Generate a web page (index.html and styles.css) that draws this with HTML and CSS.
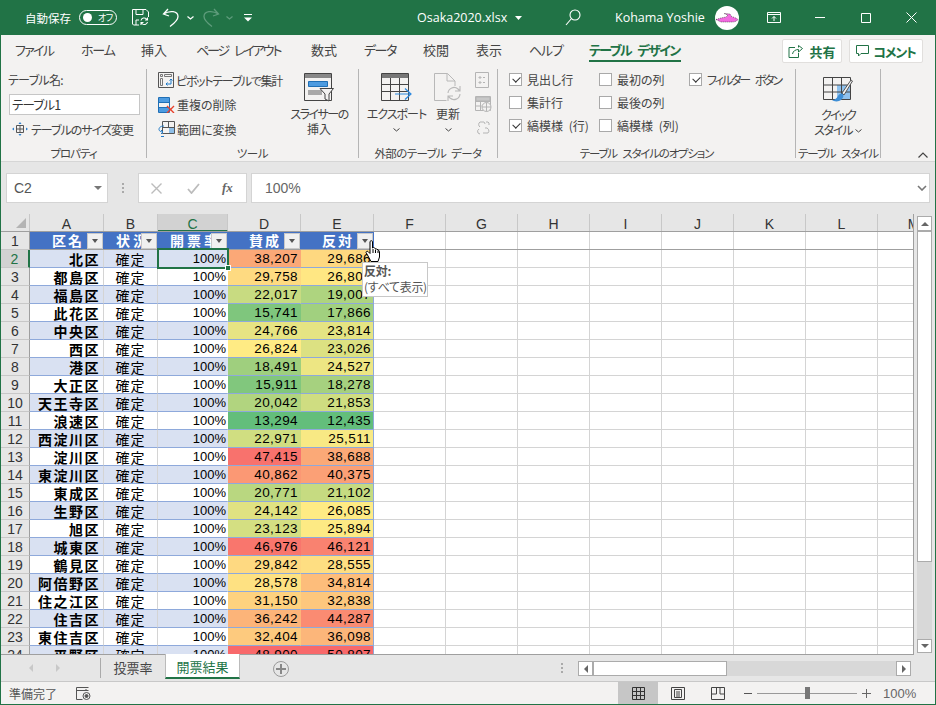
FILE: index.html
```html
<!DOCTYPE html>
<html lang="ja">
<head>
<meta charset="utf-8">
<title>Osaka2020.xlsx</title>
<link rel="stylesheet" href="styles.css">
</head>
<body>
<div class="window">
  <header class="titlebar">
    <span class="autosave">自動保存</span>
    <span class="toggle"><i class="knob"></i><span class="toggle-text">オフ</span></span>
    <svg class="qa save" width="17" height="17" viewBox="0 0 17 17" fill="none" stroke="#fff"><path d="M.5.500h13.500l2.500 2.500v5M.5.500v14.500l1 1h5.500M4 .5v5h7V.5M4 16v-5h3"/><path d="M9 11.500a3.200 3.200 0 0 1 5.500-1.500l1 1M15.500 13a3.200 3.200 0 0 1-5.500 1.500l-1-1M15.500 8.500V11h-2.500M9 16v-2.500h2.500" stroke-width="1.100"/></svg>
    <svg class="qa undo" width="18" height="19" viewBox="0 0 18 19" fill="none" stroke="#fff" stroke-width="1.300"><path d="M6 1 1.500 6 7 8M1.500 6C8 2 16 3 16 8.500c0 4-4 7-8 10"/></svg>
    <svg class="qa chev1" width="7" height="4" viewBox="0 0 7 4" fill="none" stroke="#fff" stroke-width="1.200"><path d="m.5.500 3 2.500 3-2.500"/></svg>
    <svg class="qa redo" width="18" height="19" viewBox="0 0 18 19" fill="none" stroke="#5f9c7c" stroke-width="1.300"><path d="M12 1l4.500 5L11 8M16.500 6C10 2 2 3 2 8.500c0 4 4 7 8 10"/></svg>
    <svg class="qa chev2" width="7" height="4" viewBox="0 0 7 4" fill="none" stroke="#5f9c7c" stroke-width="1.200"><path d="m.5.500 3 2.500 3-2.500"/></svg>
    <svg class="qa more" width="8" height="8" viewBox="0 0 8 8" fill="#fff"><path d="M0 0h8v1H0zM0 3.500h8L4 7.500z"/></svg>
    <span class="doc">Osaka2020.xlsx</span>
    <svg class="qa caret" width="7" height="4" viewBox="0 0 7 4" fill="#fff"><path d="M0 0h7L3.500 4z"/></svg>
    <svg class="qa search" width="16" height="17" viewBox="0 0 16 17" fill="none" stroke="#fff" stroke-width="1.100"><circle cx="10" cy="6" r="5"/><path d="M6.500 9.500 1 16"/></svg>
    <span class="user">Kohama Yoshie</span>
    <span class="avatar"><svg width="24" height="24" viewBox="0 0 24 24"><path d="M1 13.500 6 12l5-1 2-2-4-1.500 6 .5 2 3c2 0 4 1 6 2.500-1 1.500-3 2.500-6 2.500H6z" fill="#f26ae0" stroke="#222" stroke-width=".6" stroke-dasharray="1 1"/></svg></span>
    <svg class="qa display" width="14" height="11" viewBox="0 0 14 11" fill="none" stroke="#fff"><path d="M.5.500h13v10H.5zM.5 2.500h13M7 9V4.500M5 6.500l2-2 2 2"/></svg>
    <svg class="qa min" width="10" height="1" viewBox="0 0 10 1" fill="#fff"><path d="M0 0h10v1H0z"/></svg>
    <svg class="qa max" width="10" height="10" viewBox="0 0 10 10" fill="none" stroke="#fff"><path d="M.5.500h9v9h-9z"/></svg>
    <svg class="qa close" width="11" height="11" viewBox="0 0 11 11" fill="none" stroke="#fff"><path d="m.5.500 10 10M10.500.500l-10 10"/></svg>
  </header>

  <nav class="tabs">
    <span class="tab w-file">ファイル</span>
    <span class="tab w-home">ホーム</span>
    <span class="tab w-ins">挿入</span>
    <span class="tab w-page">ページ レイアウト</span>
    <span class="tab w-form">数式</span>
    <span class="tab w-data">データ</span>
    <span class="tab w-rev">校閲</span>
    <span class="tab w-view">表示</span>
    <span class="tab w-help">ヘルプ</span>
    <span class="tab tab-active">テーブル デザイン</span>
    <span class="tab-btn share"><svg width="15" height="13" viewBox="0 0 15 13" fill="none" stroke="#217346"><path d="M7 2.500H1v10h9.500V8"/><path d="M4.500 9c.5-3 3-4.500 6-4.500V7L14.500 3.500 10.500.5v2" /></svg>共有</span>
    <span class="tab-btn comment"><svg width="13" height="12" viewBox="0 0 13 12" fill="none" stroke="#217346"><path d="M.5.500h12v8H5L2.500 11V8.500h-2z" /></svg><span class="k12">コメント</span></span>
  </nav>

  <section class="ribbon">
    <div class="group g-prop">
      <div class="group-body prop-body">
        <div class="small-text k07">テーブル名:</div>
        <div class="name-input">テーブル1</div>
        <div class="cmd resize"><svg width="16" height="14" viewBox="0 0 16 14" fill="none"><path d="M4.500 3.500h7v7h-7zM8 3.500v7M4.500 7h7" stroke="#555"/><path d="M8 0 6.500 2h3zM8 14l-1.500-2h3zM0 7l2-1.500v3zM16 7l-2-1.500v3z" fill="#2a7fd0"/></svg><span class="k10">テーブルのサイズ変更</span></div>
      </div>
      <div class="group-label k10">プロパティ</div>
    </div>
    <div class="group g-tools">
      <div class="group-body tools-body">
        <div class="cmd-col tool-cmds">
          <div class="cmd"><svg width="16" height="16" viewBox="0 0 16 16" fill="none"><path d="M.5.500h15v15H.5z" stroke="#555"/><path d="M2.500 2.500h2v2h-2zM6.500 2.500h7v2h-7zM2.500 6.500h2v7h-2z" stroke="#777"/><path d="M13 7v5H8M11.500 8.500 13 7l1.500 1.500M9.500 10.500 8 12l1.500 1.500" stroke="#1f7ac8"/></svg><span class="k13">ピボットテーブルで集計</span></div>
          <div class="cmd"><svg width="17" height="16" viewBox="0 0 17 16" fill="none"><path d="M.5.500h11v15H.5zM.5 5.500h11M.5 10.500h11" stroke="#1f6fb5"/><path d="M1 1h10v4H1z" fill="#4d9be0"/><path d="M1 11h10v4H1z" fill="#4d9be0"/><path d="m9 9 7 7M16 9l-7 7" stroke="#e8402a" stroke-width="1.400"/></svg>重複の削除</div>
          <div class="cmd"><svg width="17" height="16" viewBox="0 0 17 16" fill="none"><path d="M4.500.500h12v12h-12zM4.500 6.500h12M10.500.500v6" stroke="#555"/><path d="M11 7h5v5h-5z" fill="#8fbfe8"/><path d="M6 5C2 5 1 7 1 8.500S3 11 5 11M3 9l2 2-2 2M6 15.500H3" stroke="#1f7ac8"/></svg>範囲に変換</div>
        </div>
        <div class="big slicer">
          <svg width="30" height="29" viewBox="0 0 30 29" fill="none"><path d="M.5.500h27v27H.5z" stroke="#444"/><path d="M1 1h26v4H1z" fill="#888"/><path d="M4.500 8.500h19v5h-19z" fill="#4d9be0" stroke="#1f6fb5"/><path d="M4 17h14v5H4z" fill="#a8a8a8"/><path d="M16 15.500h13.500L25 21v7l-4-2v-5z" fill="#f3f2f1" stroke="#444"/></svg>
          <span class="big-text"><span class="k15">スライサーの</span><br>挿入</span>
        </div>
      </div>
      <div class="group-label k05">ツール</div>
    </div>
    <div class="group g-ext">
      <div class="group-body ext-body">
        <div class="big export">
          <svg width="31" height="29" viewBox="0 0 31 29" fill="none"><path d="M.5.500h27v27H.5zM.5 11.500h27M.5 18.500h27M9.500 4.500v23M18.500 4.500v23" stroke="#444"/><path d="M1 1h26v4H1z" fill="#777"/><path d="M14 21h15.500M24 15.500l6 5.500-6 5.500" stroke="#2d8ae0" stroke-width="1.200"/></svg>
          <span class="big-text k10">エクスポート</span>
          <svg class="chev" width="7" height="4" viewBox="0 0 7 4" fill="none" stroke="#444"><path d="m.5.500 3 2.500 3-2.500"/></svg>
        </div>
        <div class="big refresh">
          <svg width="28" height="29" viewBox="0 0 28 29" fill="none" stroke="#b8b8b8"><path d="M.5.500h13L21 8v5M.5.500v27h12M13 .5V8h8"/><path d="M14 20a6 6 0 0 1 10-4l2 2M26 21a6 6 0 0 1-10 4l-2-2M26 13v5h-5M14 28v-5h5" stroke-width="1.100"/></svg>
          <span class="big-text">更新</span>
          <svg class="chev" width="7" height="4" viewBox="0 0 7 4" fill="none" stroke="#444"><path d="m.5.500 3 2.500 3-2.500"/></svg>
        </div>
        <div class="cmd-col ext-icons">
          <svg width="15" height="16" viewBox="0 0 15 16" fill="none" stroke="#b4b4b4"><path d="M.5.500h13v15H.5zM4 5h2v1H4zM4 10h2v1H4zM8 5.500h2M8 10.500h2"/></svg>
          <svg width="17" height="16" viewBox="0 0 17 16" fill="none" stroke="#b4b4b4"><path d="M.5.500h15v14H.5zM.5 5.500h15M.5 10h6M5.500 5.500v9"/><path d="M1 1h14v4H1z" fill="#c8c8c8"/><circle cx="11.500" cy="11" r="4.500" fill="#f3f2f1"/><path d="M7 11h9M11.500 6.500v9"/></svg>
          <svg width="16" height="15" viewBox="0 0 16 15" fill="none" stroke="#b4b4b4"><path d="M5 7a3 3 0 0 1 0-5h4a3 3 0 0 1 1 2M10 8a3 3 0 0 1 3 5H8M5 14l-2-1a3 3 0 0 1 1-4M12 1v2M15 4h-2M14 2l-1 1"/></svg>
        </div>
      </div>
      <div class="group-label lab-ext">外部のテーブル データ</div>
    </div>
    <div class="group g-opt">
      <div class="group-body opt-body">
        <label class="opt"><i class="box on"></i>見出し行</label>
        <label class="opt"><i class="box"></i>最初の列</label>
        <label class="opt"><i class="box on"></i><span class="filter">フィルター ボタン</span></label>
        <label class="opt"><i class="box"></i>集計行</label>
        <label class="opt"><i class="box"></i>最後の列</label>
        <span></span>
        <label class="opt sp"><i class="box on"></i>縞模様 (行)</label>
        <label class="opt sp"><i class="box"></i>縞模様 (列)</label>
      </div>
      <div class="group-label lab-opt">テーブル スタイルのオプション</div>
    </div>
    <div class="group g-style">
      <div class="group-body style-body">
        <svg width="30" height="28" viewBox="0 0 30 28" fill="none"><path d="M14 9h14v14H14z" fill="#8fc2ee"/><path d="M.5 1.500h27v22H.5zM.5 9h27M.5 16h27M9.500 1.500v22M18.500 1.500v22" stroke="#444"/><path d="M19 17 28 4l1.500 1L21 19z" fill="#f3f2f1" stroke="#555"/><path d="M20 18c-2-1-4 0-5 2s-3 4-6 4c2 2 8 2 10-1 1-1 2-3 1-5z" fill="#3f8fd6"/></svg>
        <span class="big-text"><span class="k20">クイック</span><br><span class="k12">スタイル</span> <svg class="chev-in" width="7" height="4" viewBox="0 0 7 4" fill="none" stroke="#444"><path d="m.5.500 3 2.500 3-2.500"/></svg></span>
      </div>
      <div class="group-label lab-style">テーブル スタイル</div>
    </div>
    <div class="collapse"><svg width="10" height="6" viewBox="0 0 10 6" fill="none" stroke="#444" stroke-width="1.200"><path d="m.5 5.500 4.500-4.500 4.500 4.500"/></svg></div>
  </section>

  <section class="fbar">
    <div class="namebox"><span>C2</span><svg width="8" height="4" viewBox="0 0 8 4" fill="#777"><path d="M0 0h8L4 4z"/></svg></div>
    <div class="fdots"><i></i><i></i><i></i></div>
    <div class="fbtns">
      <svg width="11" height="11" viewBox="0 0 11 11" fill="none" stroke="#bcbcbc" stroke-width="1.400"><path d="m.5.500 10 10M10.500.500l-10 10"/></svg>
      <svg width="13" height="11" viewBox="0 0 13 11" fill="none" stroke="#bcbcbc" stroke-width="1.800"><path d="m1 6 3.500 4L12 1"/></svg>
      <span class="fx">fx</span>
    </div>
    <div class="finput"><span>100%</span><svg width="10" height="6" viewBox="0 0 10 6" fill="none" stroke="#777" stroke-width="1.600"><path d="m1 1 4 4 4-4"/></svg></div>
  </section>

  <section class="main">
    <div class="sheet">
      <div class="head">
        <div class="corner"><i></i></div>
        <div class="ch a">A</div><div class="ch b">B</div><div class="ch c cur">C</div><div class="ch d">D</div><div class="ch e">E</div>
        <div class="ch f">F</div><div class="ch f">G</div><div class="ch f">H</div><div class="ch f">I</div><div class="ch f">J</div><div class="ch f">K</div><div class="ch f">L</div><div class="ch f">M</div>
      </div>
      <div class="row first"><div class="rh">1</div>
        <div class="th a"><b>区名</b><i class="fb"></i></div><div class="th b"><b class="clip">状況</b><i class="fb"></i></div><div class="th c"><b class="clip">開票率</b><i class="fb"></i></div><div class="th d"><b>賛成</b><i class="fb"></i></div><div class="th e"><b>反対</b><i class="fb"></i></div><div class="blank"></div></div>
      <div class="row band"><div class="rh cur">2</div><div class="td a nm">北区</div><div class="td b">確定</div><div class="td c">100%</div><div class="td d" style="background:#fba877">38,207</div><div class="td e" style="background:#fed880">29,686</div><div class="blank"></div></div>
      <div class="row"><div class="rh">3</div><div class="td a nm">都島区</div><div class="td b">確定</div><div class="td c">100%</div><div class="td d" style="background:#feda81">29,758</div><div class="td e" style="background:#ffe783">26,807</div><div class="blank"></div></div>
      <div class="row band"><div class="rh">4</div><div class="td a nm">福島区</div><div class="td b">確定</div><div class="td c">100%</div><div class="td d" style="background:#c8db81">22,017</div><div class="td e" style="background:#aed47f">19,007</div><div class="blank"></div></div>
      <div class="row"><div class="rh">5</div><div class="td a nm">此花区</div><div class="td b">確定</div><div class="td c">100%</div><div class="td d" style="background:#7fc67d">15,741</div><div class="td e" style="background:#a1d07f">17,866</div><div class="blank"></div></div>
      <div class="row band"><div class="rh">6</div><div class="td a nm">中央区</div><div class="td b">確定</div><div class="td c">100%</div><div class="td d" style="background:#e7e483">24,766</div><div class="td e" style="background:#e5e483">23,814</div><div class="blank"></div></div>
      <div class="row"><div class="rh">7</div><div class="td a nm">西区</div><div class="td b">確定</div><div class="td c">100%</div><div class="td d" style="background:#ffeb84">26,824</div><div class="td e" style="background:#dce182">23,026</div><div class="blank"></div></div>
      <div class="row band"><div class="rh">8</div><div class="td a nm">港区</div><div class="td b">確定</div><div class="td c">100%</div><div class="td d" style="background:#9fcf7e">18,491</div><div class="td e" style="background:#ede683">24,527</div><div class="blank"></div></div>
      <div class="row"><div class="rh">9</div><div class="td a nm">大正区</div><div class="td b">確定</div><div class="td c">100%</div><div class="td d" style="background:#81c77d">15,911</div><div class="td e" style="background:#a6d17f">18,278</div><div class="blank"></div></div>
      <div class="row band"><div class="rh">10</div><div class="td a nm">天王寺区</div><div class="td b">確定</div><div class="td c">100%</div><div class="td d" style="background:#b1d47f">20,042</div><div class="td e" style="background:#cfdd81">21,853</div><div class="blank"></div></div>
      <div class="row"><div class="rh">11</div><div class="td a nm">浪速区</div><div class="td b">確定</div><div class="td c">100%</div><div class="td d" style="background:#63be7b">13,294</div><div class="td e" style="background:#63be7b">12,435</div><div class="blank"></div></div>
      <div class="row band"><div class="rh">12</div><div class="td a nm">西淀川区</div><div class="td b">確定</div><div class="td c">100%</div><div class="td d" style="background:#d0de81">22,971</div><div class="td e" style="background:#f8e984">25,511</div><div class="blank"></div></div>
      <div class="row"><div class="rh">13</div><div class="td a nm">淀川区</div><div class="td b">確定</div><div class="td c">100%</div><div class="td d" style="background:#f8726d">47,415</div><div class="td e" style="background:#fba977">38,688</div><div class="blank"></div></div>
      <div class="row band"><div class="rh">14</div><div class="td a nm">東淀川区</div><div class="td b">確定</div><div class="td c">100%</div><div class="td d" style="background:#fb9874">40,862</div><div class="td e" style="background:#fba076">40,375</div><div class="blank"></div></div>
      <div class="row"><div class="rh">15</div><div class="td a nm">東成区</div><div class="td b">確定</div><div class="td c">100%</div><div class="td d" style="background:#b9d780">20,771</div><div class="td e" style="background:#c6db81">21,102</div><div class="blank"></div></div>
      <div class="row band"><div class="rh">16</div><div class="td a nm">生野区</div><div class="td b">確定</div><div class="td c">100%</div><div class="td d" style="background:#e0e282">24,142</div><div class="td e" style="background:#ffeb84">26,085</div><div class="blank"></div></div>
      <div class="row"><div class="rh">17</div><div class="td a nm">旭区</div><div class="td b">確定</div><div class="td c">100%</div><div class="td d" style="background:#d4df82">23,123</div><div class="td e" style="background:#fdea84">25,894</div><div class="blank"></div></div>
      <div class="row band"><div class="rh">18</div><div class="td a nm">城東区</div><div class="td b">確定</div><div class="td c">100%</div><div class="td d" style="background:#f9766d">46,976</div><div class="td e" style="background:#f98270">46,121</div><div class="blank"></div></div>
      <div class="row"><div class="rh">19</div><div class="td a nm">鶴見区</div><div class="td b">確定</div><div class="td c">100%</div><div class="td d" style="background:#fed981">29,842</div><div class="td e" style="background:#fede82">28,555</div><div class="blank"></div></div>
      <div class="row band"><div class="rh">20</div><div class="td a nm">阿倍野区</div><div class="td b">確定</div><div class="td c">100%</div><div class="td d" style="background:#fee182">28,578</div><div class="td e" style="background:#fdbd7b">34,814</div><div class="blank"></div></div>
      <div class="row"><div class="rh">21</div><div class="td a nm">住之江区</div><div class="td b">確定</div><div class="td c">100%</div><div class="td d" style="background:#fed27f">31,150</div><div class="td e" style="background:#fdc77d">32,838</div><div class="blank"></div></div>
      <div class="row band"><div class="rh">22</div><div class="td a nm">住吉区</div><div class="td b">確定</div><div class="td c">100%</div><div class="td d" style="background:#fcb479">36,242</div><div class="td e" style="background:#fa8b72">44,287</div><div class="blank"></div></div>
      <div class="row"><div class="rh">23</div><div class="td a nm">東住吉区</div><div class="td b">確定</div><div class="td c">100%</div><div class="td d" style="background:#fdca7e">32,404</div><div class="td e" style="background:#fcb67a">36,098</div><div class="blank"></div></div>
      <div class="row band"><div class="rh">24</div><div class="td a nm">平野区</div><div class="td b">確定</div><div class="td c">100%</div><div class="td d" style="background:#f8696b">48,900</div><div class="td e" style="background:#f8696b">50,807</div><div class="blank"></div></div>
      <div class="selection"><i class="handle"></i></div>
      <div class="tip"><b>反対:</b><span>(すべて表示)</span></div>
      <svg class="hand" width="17" height="23" viewBox="0 0 17 23"><path d="M5 1.500c1-1 2-1 2.500 0V8l1-.5 1 .5 1 .5 1 .5 2 1 1 2v5l-1.500 4.500H6L2.500 15 1 12.500c0-1 1-1.500 2-1l2 2z" fill="#fff" stroke="#000"/><path d="M8 9v4M10.500 9.500V13M13 10.500V13" stroke="#000" fill="none"/></svg>
    </div>
    <aside class="vscroll">
      <div class="sb-btn top"><i class="up"></i></div>
      <div class="v-thumb"></div>
      <div class="v-track"></div>
      <div class="sb-btn bot"><i class="down"></i></div>
    </aside>
  </section>

  <section class="sheetbar">
    <div class="nav"><i class="l"></i><i class="r"></i></div>
    <div class="stab">投票率</div>
    <div class="stab on">開票結果</div>
    <div class="add"><svg width="10" height="10" viewBox="0 0 10 10" fill="#888"><path d="M4 0h2v4h4v2H6v4H4V6H0V4h4z"/></svg></div>
    <div class="hdots"><i></i><i></i><i></i></div>
    <div class="hscroll">
      <div class="h-btn"><i class="l"></i></div>
      <div class="h-thumb"></div>
      <div class="h-track"></div>
      <div class="h-btn"><i class="r"></i></div>
    </div>
  </section>

  <footer class="status">
    <span class="ready">準備完了</span>
    <svg class="macro" width="15" height="13" viewBox="0 0 15 13" fill="none" stroke="#555"><path d="M.5.500h12M.5 3.500h12M.5.500v12h6M10 2v2"/><circle cx="10.500" cy="9" r="3.500"/><circle cx="10.500" cy="9" r="1.500" fill="#555"/></svg>
    <div class="view active"><svg width="13" height="13" viewBox="0 0 13 13" fill="none" stroke="#333"><path d="M.5.500h12v12H.5zM.5 4.500h12M.5 8.500h12M4.500.5v12M8.500.5v12"/></svg></div>
    <div class="view"><svg width="14" height="13" viewBox="0 0 14 13" fill="none" stroke="#444"><path d="M.5.500h13v12H.5zM3.500 2.500h7v8h-7zM5 5h4M5 7h4M5 9h4"/></svg></div>
    <div class="view"><svg width="14" height="13" viewBox="0 0 14 13" fill="none" stroke="#444"><path d="M.5.500h13v12H.5zM5.500.500v6.500M9 .5v6.500h4.500M.5 7h5"/></svg></div>
    <div class="zoom">
      <i class="zm"></i>
      <div class="slider"><i></i></div>
      <span class="zp"><svg width="9" height="9" viewBox="0 0 9 9" fill="#666"><path d="M4 0h1v4h4v1H5v4H4V5H0V4h4z"/></svg></span>
      <span class="pct">100%</span>
    </div>
  </footer>
</div>
</body>
</html>
```

FILE: styles.css
```css
* { box-sizing: border-box; }
html, body { margin: 0; padding: 0; }
body {
  width: 936px;
  height: 705px;
  overflow: hidden;
  font-family: "Noto Sans CJK JP", "Noto Sans", sans-serif;
  font-feature-settings: "palt";
  color: #444;
}
svg { display: block; flex: none; }
i { display: block; font-style: normal; }

.k05 { letter-spacing: -.4px; }
.k07 { letter-spacing: -.7px; }
.k10 { letter-spacing: -1px; }
.k12 { letter-spacing: -1.200px; }
.k13 { letter-spacing: -1.300px; }
.k15 { letter-spacing: -1.500px; }
.k20 { letter-spacing: -2px; }
.filter { letter-spacing: -2.100px; word-spacing: 5px; }
.lab-ext { letter-spacing: -.6px; word-spacing: 3px; }
.lab-opt { letter-spacing: -1.200px; word-spacing: 4px; }
.lab-style { letter-spacing: -1.100px; word-spacing: 4px; }
.sp { word-spacing: 3px; }

.window {
  width: 936px;
  height: 705px;
  display: flex;
  flex-direction: column;
  background: #e6e6e6;
  border-left: 1px solid #217346;
  border-right: 1px solid #217346;
  border-bottom: 1px solid #217346;
  overflow: hidden;
}

/* title bar */
.titlebar {
  height: 35px;
  flex: none;
  margin: 0 -1px;
  background: #217346;
  color: #fff;
  display: flex;
  align-items: center;
  font-size: 12px;
  padding-left: 25px;
}
.autosave { width: 47px; font-size: 11.500px; white-space: nowrap; }
.toggle {
  margin-left: 7px;
  width: 38px;
  height: 15px;
  border: 1px solid #fff;
  border-radius: 8px;
  display: flex;
  align-items: center;
  padding-left: 3px;
  flex: none;
}
.knob { width: 9px; height: 9px; border-radius: 50%; background: #fff; }
.toggle-text { font-size: 9px; margin-left: 6px; letter-spacing: -.5px; white-space: nowrap; }
.save { margin-left: 15px; }
.undo { margin-left: 13px; }
.chev1 { margin-left: 7px; }
.redo { margin-left: 8px; }
.chev2 { margin-left: 6px; }
.more { margin-left: 11px; }
.doc { margin-left: 165px; width: 92px; font-family: "Open Sans", sans-serif; font-size: 12.500px; white-space: nowrap; }
.caret { margin-left: 6px; }
.search { margin-left: 43px; }
.user { margin-left: 34px; width: 90px; font-family: "Open Sans", sans-serif; font-size: 12.500px; white-space: nowrap; }
.avatar { margin-left: 10px; width: 24px; height: 24px; border-radius: 50%; background: #fff; overflow: hidden; flex: none; }
.display { margin-left: 28px; }
.min { margin-left: 34px; }
.max { margin-left: 36px; }
.close { margin-left: 35px; }

/* tabs */
.tabs {
  height: 32px;
  flex: none;
  background: #f3f2f1;
  display: flex;
  align-items: center;
  font-size: 13px;
  color: #444;
  padding-left: 14px;
}
.tab { flex: none; white-space: nowrap; height: 32px; line-height: 30px; }
.w-file { width: 66px; letter-spacing: -1.700px; }
.w-home { width: 60px; letter-spacing: -1.200px; }
.w-ins { width: 55px; }
.w-page { width: 115px; letter-spacing: -2.100px; word-spacing: 5px; }
.w-form { width: 53px; }
.w-data { width: 59px; letter-spacing: -1.500px; }
.w-rev { width: 53px; }
.w-view { width: 53px; }
.w-help { width: 60px; letter-spacing: -1.200px; }
.tab-active {
  width: 92px;
  color: #217346;
  font-weight: 700;
  position: relative;
  letter-spacing: -1.600px;
  word-spacing: 5px;
}
.tab-active::after {
  content: "";
  position: absolute;
  left: 0;
  right: 0;
  bottom: 5px;
  height: 2px;
  background: #217346;
}
.tab-btn {
  height: 24px;
  background: #fff;
  border: 1px solid #e1dfdd;
  border-radius: 2px;
  display: flex;
  align-items: center;
  justify-content: center;
  gap: 6px;
  color: #217346;
  font-weight: 700;
  font-size: 13px;
  flex: none;
  white-space: nowrap;
}
.share { margin-left: 101px; width: 60px; }
.comment { margin-left: 7px; width: 74px; gap: 4px; }

/* ribbon */
.ribbon {
  height: 95px;
  flex: none;
  background: #f3f2f1;
  border-bottom: 1px solid #d6d6d6;
  display: flex;
  font-size: 12px;
  color: #444;
}
.group {
  flex: none;
  display: flex;
  flex-direction: column;
  margin-top: 2px;
  margin-bottom: 3px;
  border-right: 1px solid #b5b5b5;
}
.group-body { flex: 1; min-height: 0; }
.group-label { height: 12px; line-height: 15px; text-align: center; font-size: 11.500px; color: #444; white-space: nowrap; flex: none; }
.g-prop { width: 146px; }
.g-tools { width: 212px; }
.g-ext { width: 139px; }
.g-opt { width: 298px; }
.g-style { width: 85px; }
.small-text { line-height: 16px; }
.prop-body { padding: 3px 0 0 7px; }
.name-input {
  width: 131px;
  height: 21px;
  margin: 6px 0 5px 1px;
  background: #fff;
  border: 1px solid #c6c6c6;
  line-height: 19px;
  padding-left: 2px;
  font-size: 12.500px;
  color: #333;
  letter-spacing: -.8px;
}
.cmd { display: flex; align-items: center; gap: 2px; white-space: nowrap; height: 24px; }
.resize { gap: 3px; margin-left: 4px; height: 18px; }
.tools-body { display: flex; padding: 0 0 0 11px; }
.cmd-col { display: flex; flex-direction: column; flex: none; }
.tool-cmds { margin-top: -1px; }
.tools-body .cmd { height: 24.500px; }
.slicer { margin-left: 8px; }
.big { display: flex; flex-direction: column; align-items: center; width: 58px; padding-top: 4px; flex: none; }
.big-text { display: block; text-align: center; line-height: 15px; margin-top: 4px; white-space: nowrap; }
.chev { margin-top: 7px; }
.chev-in { display: inline-block; vertical-align: 2px; }
.ext-body { display: flex; padding-left: 9px; }
.export { width: 57px; }
.refresh { width: 28px; margin-left: 9px; }
.ext-icons { margin-left: 13px; padding-top: 3px; gap: 8px; width: 17px; }
.opt-body {
  display: grid;
  grid-template-columns: 90px 90px 100px;
  grid-template-rows: repeat(3, 23px);
  padding: 0 0 0 11px;
  margin-top: -1px;
}
.opt { display: flex; align-items: center; gap: 5px; white-space: nowrap; }
.box {
  width: 13px;
  height: 13px;
  background: #fff;
  border: 1px solid #a9a9a9;
  position: relative;
  flex: none;
}
.box.on::after {
  content: "";
  position: absolute;
  left: 3px;
  top: 1.500px;
  width: 6px;
  height: 4px;
  border-left: 1px solid #333;
  border-bottom: 1px solid #333;
  transform: rotate(-45deg);
}
.style-body { display: flex; flex-direction: column; align-items: center; padding-top: 7px; }
.style-body .big-text { margin-top: 3px; }
.collapse { flex: 1; display: flex; align-items: flex-end; justify-content: flex-end; padding: 0 7px 3px 0; }

/* formula bar */
.fbar {
  height: 52px;
  flex: none;
  display: flex;
  align-items: flex-start;
  padding: 11px 5px 0 5px;
  background: #e6e6e6;
}
.namebox {
  width: 102px;
  height: 30px;
  background: #fff;
  border: 1px solid #d4d4d4;
  display: flex;
  align-items: center;
  justify-content: space-between;
  padding: 0 5px 0 7px;
  font-family: "Liberation Sans", sans-serif;
  font-size: 14px;
  color: #555;
}
.fdots { width: 30px; height: 30px; display: flex; flex-direction: column; align-items: center; justify-content: center; gap: 2px; }
.fdots i { width: 2px; height: 2px; background: #aaa; }
.fbtns {
  width: 109px;
  height: 30px;
  background: #fff;
  border: 1px solid #d4d4d4;
  display: flex;
  align-items: center;
  padding-left: 12px;
  gap: 25px;
}
.fx { font-family: "Liberation Serif", serif; font-style: italic; font-weight: 700; font-size: 13px; color: #666; margin-left: -3px; }
.finput {
  width: 679px;
  height: 30px;
  margin-left: 4px;
  background: #fff;
  border: 1px solid #d4d4d4;
  display: flex;
  align-items: center;
  justify-content: space-between;
  padding: 0 2px 0 13px;
  font-family: "Liberation Sans", sans-serif;
  font-size: 14px;
  color: #666;
}

/* sheet */
.main { height: 441px; flex: none; display: flex; background: #e6e6e6; }
.sheet {
  width: 913px;
  height: 441px;
  flex: none;
  position: relative;
  overflow: hidden;
  background: #fff;
  border-right: 1px solid #9f9f9f;
  border-bottom: 1px solid #9f9f9f;
  font-family: "Liberation Sans", "Noto Sans CJK JP", sans-serif;
  font-size: 13.500px;
  color: #000;
}
.head { height: 18px; display: flex; background: #e6e6e6; border-bottom: 1px solid #9f9f9f; overflow: hidden; }
.corner { width: 29px; flex: none; border-right: 1px solid #c8c8c8; display: flex; align-items: flex-end; justify-content: flex-end; padding: 0 3px 3px 0; }
.corner i { width: 0; height: 0; border-style: solid; border-width: 0 0 10px 10px; border-color: transparent transparent #b4b4b4 transparent; }
.a { width: 74px; }
.b { width: 54px; }
.c { width: 70px; }
.d { width: 73px; }
.e { width: 73px; }
.f { width: 72px; }
.ch {
  flex: none;
  border-right: 1px solid #c8c8c8;
  text-align: center;
  line-height: 20px;
  font-family: "Liberation Sans", sans-serif;
  font-size: 14px;
  color: #333;
}
.ch.cur { background: #d2d2d2; color: #217346; border-bottom: 2px solid #217346; height: 18px; }
.row { height: 18px; display: flex; border-bottom: 1px solid #d4d4d4; }
.row.first { border-bottom-color: #9f9f9f; }
.rh {
  width: 29px;
  flex: none;
  background: #e6e6e6;
  border-right: 1px solid #9f9f9f;
  margin-bottom: -1px;
  text-align: center;
  line-height: 18px;
  font-size: 14px;
  color: #333;
  border-bottom: 1px solid #c8c8c8;
}
.rh.cur { background: #d2d2d2; color: #217346; border-right: 2px solid #217346; }
.th {
  flex: none;
  background: #4472c4;
  color: #fff;
  display: flex;
  align-items: center;
  justify-content: flex-end;
  position: relative;
  overflow: hidden;
  font-family: "Noto Sans CJK JP", sans-serif;
}
.th b { letter-spacing: 2px; font-size: 14px; padding-right: 20px; line-height: 17px; white-space: nowrap; }
.th b.clip { padding: 0 0 0 12px; letter-spacing: 3px; width: 100%; overflow: hidden; }
.fb {
  position: absolute;
  right: 1px;
  top: 1px;
  width: 16px;
  height: 16px;
  background: #f0f0f0 ;
  border: 1px solid #c8c8c8;
}
.fb::after {
  content: "";
  position: absolute;
  left: 3.500px;
  top: 5px;
  width: 0;
  height: 0;
  border-style: solid;
  border-width: 4px 3.500px 0 3.500px;
  border-color: #555 transparent transparent transparent;
}
.td {
  flex: none;
  line-height: 18px;
  text-align: right;
  padding-right: 2px;
  letter-spacing: .4px;
  white-space: nowrap;
  border-right: 1px solid transparent;
  margin-bottom: -1px;
}
.td.a { border-right: 1px solid #d4d4d4; }
.td.b { border-right: 1px solid #d4d4d4; }
.td.b { text-align: center; padding: 0; font-family: "Noto Sans CJK JP", sans-serif; font-size: 14px; letter-spacing: 1px; }
.td.nm { font-family: "Noto Sans CJK JP", sans-serif; font-size: 14px; font-weight: 700; letter-spacing: 1.500px; padding-right: 3px; }
.td.d, .td.e { padding-right: 2px; }
.td.e { border-right: 1px solid #8ea9db; }
.td.c { padding-right: 1px; font-size: 13px; letter-spacing: 0; }
.row .td { border-bottom: 1px solid #8ea9db; }
.band .a, .band .b, .band .c { background: #d9e1f2; }
.blank {
  flex: 1;
  background: repeating-linear-gradient(90deg, transparent 0, transparent 71px, #d4d4d4 71px, #d4d4d4 72px);
}
.selection {
  position: absolute;
  left: 156px;
  top: 34px;
  width: 72px;
  height: 21px;
  border: 2px solid #217346;
}
.handle {
  position: absolute;
  right: -4px;
  bottom: -4px;
  width: 6px;
  height: 6px;
  background: #217346;
  border: 1px solid #fff;
}
.hand { position: absolute; left: 364px; top: 26px; }
.tip {
  position: absolute;
  left: 361px;
  top: 48px;
  width: 66px;
  height: 35px;
  background: #fff;
  border: 1px solid #c8c8c8;
  display: flex;
  flex-direction: column;
  font-family: "Noto Sans CJK JP", sans-serif;
  font-size: 12px;
  line-height: 16px;
  color: #555;
  padding-left: 1px;
  white-space: nowrap;
  letter-spacing: -.3px;
}

/* vertical scrollbar */
.vscroll { flex: 1; display: flex; flex-direction: column; align-items: center; padding-bottom: 2px; height: 441px; }
.sb-btn { width: 15px; flex: none; background: #fff; border: 1px solid #ababab; display: flex; align-items: center; justify-content: center; }
.sb-btn.top { height: 15px; margin-top: 2px; }
.sb-btn.bot { height: 14px; }
.up, .down { width: 0; height: 0; border-style: solid; border-color: transparent; }
.up { border-width: 0 4px 4px 4px; border-bottom-color: #666; }
.down { border-width: 4px 4px 0 4px; border-top-color: #666; }
.v-thumb { width: 15px; height: 331px; flex: none; background: #fff; border: 1px solid #ababab; }
.v-track { width: 15px; flex: 1; background: #d8d8d8; }

/* sheet tabs */
.sheetbar {
  height: 27px;
  flex: none;
  display: flex;
  align-items: flex-start;
  background: #e6e6e6;
  font-size: 13px;
  border-bottom: 1px solid #c8c8c8;
}
.nav { width: 100px; height: 20px; margin-top: 3px; display: flex; align-items: center; padding-left: 28px; gap: 23px; border-right: 1px solid #aaa; flex: none; }
.l, .r { width: 0; height: 0; border-style: solid; border-color: transparent; }
.nav .l { border-width: 4px 4px 4px 0; border-right-color: #c8c8c8; }
.nav .r { border-width: 4px 0 4px 4px; border-left-color: #c8c8c8; }
.stab { width: 64px; height: 26px; line-height: 26px; text-align: center; color: #444; flex: none; }
.stab.on { width: 75px; background: #fff; color: #217346; border-bottom: 2px solid #217346; border-left: 1px solid #bbb; border-right: 1px solid #bbb; line-height: 26px; margin-top: -1px; height: 25px; position: relative; }
.add { width: 16px; height: 16px; margin: 6px 0 0 33px; border: 1px solid #9a9a9a; border-radius: 50%; display: flex; align-items: center; justify-content: center; flex: none; }
.hdots { width: 2px; margin: 8px 0 0 272px; display: flex; flex-direction: column; gap: 2px; flex: none; }
.hdots i { width: 2px; height: 2px; background: #aaa; }
.hscroll { display: flex; width: 333px; height: 15px; margin: 6px 0 0 15px; flex: none; }
.h-btn { width: 15px; height: 15px; background: #fff; border: 1px solid #ababab; display: flex; align-items: center; justify-content: center; flex: none; }
.h-btn .l { border-width: 4px 4px 4px 0; border-right-color: #666; }
.h-btn .r { border-width: 4px 0 4px 4px; border-left-color: #666; }
.h-thumb { width: 134px; background: #fff; border: 1px solid #ababab; flex: none; }
.h-track { flex: 1; background: #d8d8d8; }

/* status bar */
.status {
  height: 22px;
  flex: none;
  display: flex;
  align-items: center;
  background: #f3f2f1;
  font-size: 12px;
  color: #555;
  padding-left: 8px;
}
.ready { width: 67px; flex: none; }
.view { width: 40px; height: 100%; display: flex; align-items: center; justify-content: center; flex: none; }
.view.active { margin-left: 527px; background: #c6c6c6; }
.zoom { display: flex; align-items: center; margin-left: 6px; font-family: "Liberation Sans", sans-serif; }
.zm { width: 8px; height: 1px; margin-right: 5px; background: #555; flex: none; }
.slider { width: 100px; height: 1px; background: #999; position: relative; flex: none; }
.slider i { position: absolute; left: 48px; top: -6px; width: 5px; height: 12px; background: #777; }
.zp { margin-left: 5px; width: 18px; flex: none; }
.pct { margin-left: 3px; font-size: 13px; color: #666; white-space: nowrap; }
```
